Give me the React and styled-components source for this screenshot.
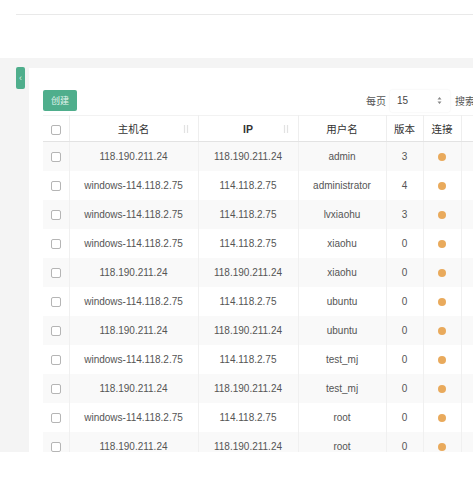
import React from 'react'
import styled, { createGlobalStyle } from 'styled-components'

const GlobalStyle = createGlobalStyle`
    html, body {
        margin: 0;
        padding: 0;
        background: #ffffff;
        font-family: "Liberation Sans", "Noto Sans CJK SC", Arial, sans-serif;
        overflow: hidden;
    }
`

const rows = [
    { host: '118.190.211.24', ip: '118.190.211.24', user: 'admin', ver: 3 },
    { host: 'windows-114.118.2.75', ip: '114.118.2.75', user: 'administrator', ver: 4 },
    { host: 'windows-114.118.2.75', ip: '114.118.2.75', user: 'lvxiaohu', ver: 3 },
    { host: 'windows-114.118.2.75', ip: '114.118.2.75', user: 'xiaohu', ver: 0 },
    { host: '118.190.211.24', ip: '118.190.211.24', user: 'xiaohu', ver: 0 },
    { host: 'windows-114.118.2.75', ip: '114.118.2.75', user: 'ubuntu', ver: 0 },
    { host: '118.190.211.24', ip: '118.190.211.24', user: 'ubuntu', ver: 0 },
    { host: 'windows-114.118.2.75', ip: '114.118.2.75', user: 'test_mj', ver: 0 },
    { host: '118.190.211.24', ip: '118.190.211.24', user: 'test_mj', ver: 0 },
    { host: 'windows-114.118.2.75', ip: '114.118.2.75', user: 'root', ver: 0 },
    { host: '118.190.211.24', ip: '118.190.211.24', user: 'root', ver: 0 },
]

const SortIcon = () => (
    <svg width="6" height="10" viewBox="0 0 6 10">
        <path d="M1.5 1v8M4.5 1v8" stroke="#e2e2e2" strokeWidth="1.2" fill="none" />
    </svg>
)

const App = () => {
    return (
        <Page>
            <GlobalStyle />
            <TopBar />
            <Main>
                <Toggle>‹</Toggle>
                <Card>
                    <Toolbar>
                        <CreateButton>创建</CreateButton>
                        <Controls>
                            <Label>每页</Label>
                            <Select>
                                <span>15</span>
                                <svg width="5" height="9" viewBox="0 0 5 9">
                                    <path d="M0.5 3.5L2.5 1L4.5 3.5Z M0.5 5.5L2.5 8L4.5 5.5Z" fill="#888" />
                                </svg>
                            </Select>
                            <Label>搜索</Label>
                            <SearchBox />
                        </Controls>
                    </Toolbar>
                    <Table>
                        <colgroup>
                            <col style={{ width: 26 }} />
                            <col style={{ width: 129 }} />
                            <col style={{ width: 100 }} />
                            <col style={{ width: 88 }} />
                            <col style={{ width: 37 }} />
                            <col style={{ width: 38 }} />
                            <col style={{ width: 80 }} />
                        </colgroup>
                        <thead>
                            <tr>
                                <Th><Check /></Th>
                                <Th>主机名<Sort><SortIcon /></Sort></Th>
                                <Th $bold>IP<Sort><SortIcon /></Sort></Th>
                                <Th>用户名</Th>
                                <Th>版本</Th>
                                <Th>连接</Th>
                                <Th></Th>
                            </tr>
                        </thead>
                        <tbody>
                            {rows.map((r, i) => (
                                <Tr key={i} $odd={i % 2 === 0}>
                                    <Td><Check /></Td>
                                    <Td>{r.host}</Td>
                                    <Td>{r.ip}</Td>
                                    <Td>{r.user}</Td>
                                    <Td>{r.ver}</Td>
                                    <Td><Dot /></Td>
                                    <Td></Td>
                                </Tr>
                            ))}
                        </tbody>
                    </Table>
                </Card>
            </Main>
        </Page>
    )
}

export default App

const Page = styled.div`
    width: 473px;
    height: 477px;
    overflow: hidden;
    background: #fff;
`

const TopBar = styled.div`
    height: 14px;
    margin-left: 16px;
    border-bottom: 1px solid #e9e9e9;
    margin-bottom: 43px;
`

const Main = styled.div`
    display: flex;
    align-items: flex-start;
    height: 384px;
    padding-top: 10px;
    background: #f4f4f4;
    overflow: hidden;
`

const Toggle = styled.div`
    flex: none;
    width: 9px;
    height: 22px;
    margin-left: 16px;
    margin-top: -1px;
    border-radius: 2px;
    background: #4fae8c;
    color: #d8f0e6;
    font-size: 9px;
    line-height: 22px;
    text-align: center;
`

const Card = styled.div`
    flex: none;
    width: 640px;
    height: 384px;
    margin-left: 4px;
    padding: 22px 0 0 14px;
    box-sizing: border-box;
    background: #fff;
    overflow: hidden;
`

const Toolbar = styled.div`
    display: flex;
    align-items: center;
    justify-content: space-between;
    width: 546px;
    height: 21px;
    margin-bottom: 4px;
`

const CreateButton = styled.button`
    flex: none;
    width: 34px;
    height: 21px;
    padding: 0;
    border: none;
    border-radius: 2px;
    background: #4fae8c;
    color: #e4f5ee;
    font-family: inherit;
    font-size: 9px;
`

const Controls = styled.div`
    flex: none;
    display: flex;
    align-items: center;
    gap: 4px;
`

const Label = styled.span`
    flex: none;
    font-size: 10px;
    color: #555;
    white-space: nowrap;
`

const Select = styled.div`
    flex: none;
    display: flex;
    align-items: center;
    justify-content: space-between;
    width: 60px;
    height: 22px;
    padding: 0 8px 0 7px;
    margin-right: 1px;
    box-sizing: border-box;
    background: #fff;
    border-radius: 2px;
    box-shadow: 0 0 2px rgba(0, 0, 0, 0.08);
    font-size: 10px;
    color: #444;
`

const SearchBox = styled.div`
    flex: none;
    width: 110px;
    height: 22px;
    border: 1px solid #eee;
    box-sizing: border-box;
`

const Table = styled.table`
    border-collapse: collapse;
    table-layout: fixed;
    width: 498px;
    font-size: 10px;
    color: #555;
`

const Th = styled.th`
    position: relative;
    height: 25px;
    padding: 0;
    font-weight: ${p => (p.$bold ? 600 : 400)};
    font-size: 10.5px;
    color: #333;
    text-align: center;
    border-right: 1px solid #eeeeee;
    border-bottom: 1px solid #e3e3e3;
    border-top: 1px solid #f2f2f2;
`

const Sort = styled.span`
    position: absolute;
    right: 9px;
    top: 8px;
`

const Tr = styled.tr`
    background: ${p => (p.$odd ? '#f9f9f9' : '#ffffff')};
`

const Td = styled.td`
    height: 29px;
    padding: 0;
    text-align: center;
    white-space: nowrap;
    border-right: 1px solid #f0f0f0;
`

const Check = styled.span`
    display: inline-block;
    width: 8px;
    height: 8px;
    border: 1px solid #b5b5b5;
    border-radius: 2px;
    background: #fff;
    vertical-align: middle;
`

const Dot = styled.span`
    display: inline-block;
    width: 8px;
    height: 8px;
    border-radius: 50%;
    background: #e9aa5c;
    vertical-align: middle;
`
